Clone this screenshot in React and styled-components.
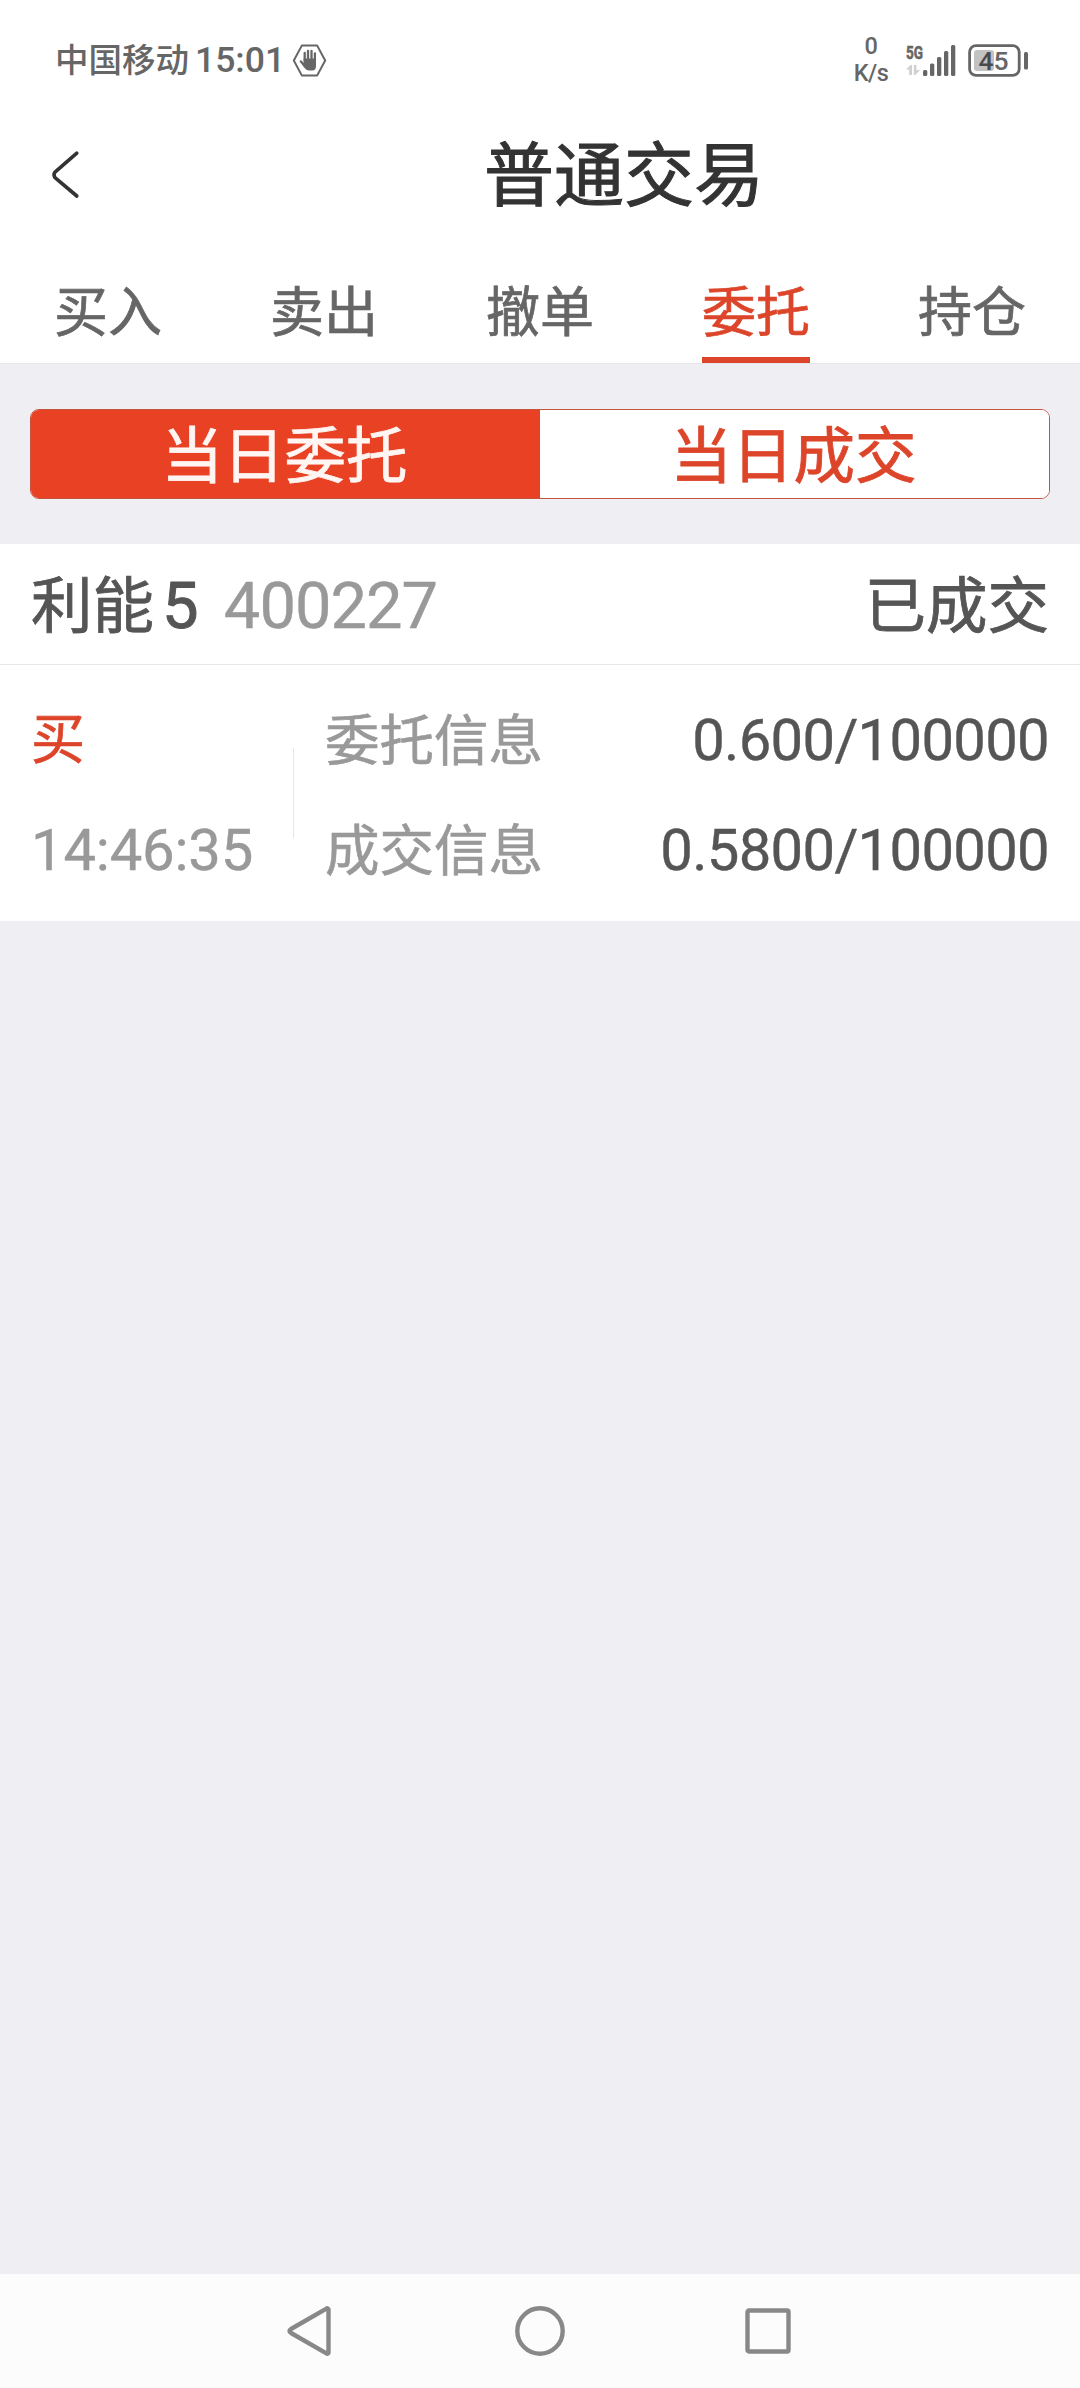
import React from "react";
import styled, { createGlobalStyle } from "styled-components";

const GlobalStyle = createGlobalStyle`
  * {
    box-sizing: border-box;
  }
  body {
    margin: 0;
    background: #efeef3;
    font-family: Roboto, "Noto Sans CJK SC", sans-serif;
  }
`;

const Screen = styled.div`
  display: flex;
  flex-direction: column;
  width: 1080px;
  height: 2388px;
  background: #efeef3;
`;

const StatusBar = styled.div`
  display: flex;
  align-items: center;
  justify-content: space-between;
  height: 120px;
  padding: 0 51px 0 55px;
  background: #fff;
  color: #666;
`;

const StatusGroup = styled.div`
  display: flex;
  align-items: center;
`;

const Carrier = styled.span`
  font-size: 33.5px;
  font-weight: 500;
  line-height: 42px;
  padding-top: 1px;
`;

const Clock = styled.span`
  margin: 0 7px 0 6px;
  font-size: 35.5px;
  font-weight: 500;
  line-height: 40px;
`;

const Speed = styled.div`
  width: 36px;
  margin-right: 17px;
  font-size: 23.5px;
  font-weight: 500;
  line-height: 27px;
  text-align: center;
  white-space: nowrap;
  letter-spacing: -0.5px;
`;

const Header = styled.div`
  display: flex;
  align-items: center;
  height: 114px;
  padding-left: 50px;
  background: #fff;
  svg {
    margin-bottom: 5px;
  }
`;

const Title = styled.div`
  margin-left: 404px;
  font-size: 70px;
  line-height: 114px;
  color: #333;
  -webkit-text-stroke: 1px;
`;

const Tabs = styled.div`
  display: flex;
  height: 130px;
  padding-top: 30px;
  background: #fff;
  border-bottom: 1px solid #e6e6e8;
`;

const Tab = styled.div`
  display: flex;
  flex: 1;
  justify-content: center;
  font-size: 54px;
  line-height: 99px;
  color: ${props => (props.$active ? "#dd452a" : "#666")};
  -webkit-text-stroke: 0.7px;
  span {
    height: 99px;
    border-bottom: 6px solid
      ${props => (props.$active ? "#dd452a" : "transparent")};
  }
`;

const SegmentWrap = styled.div`
  padding: 45px 30px;
`;

const Segment = styled.div`
  display: flex;
  height: 90px;
  border: 1px solid #c4533f;
  border-radius: 9px;
  overflow: hidden;
  background: #fff;
`;

const SegmentItem = styled.div`
  flex: 1;
  padding: 3px 2px 0 0;
  font-size: 61.5px;
  line-height: 88px;
  text-align: center;
  background: ${props => (props.$active ? "#e84124" : "#fff")};
  color: ${props => (props.$active ? "#fff5f2" : "#dd452a")};
  -webkit-text-stroke: 0.8px;
`;

const Card = styled.div`
  background: #fff;
`;

const CardHead = styled.div`
  display: flex;
  align-items: baseline;
  height: 121px;
  padding: 2px 31px 0;
  font-size: 61.5px;
  line-height: 120px;
  color: #555;
  border-bottom: 1px solid #e8e8e8;
  -webkit-text-stroke: 0.8px;
`;

const Digits = styled.span`
  font-size: ${props => props.$size}px;
  letter-spacing: -0.7px;
  -webkit-text-stroke: 0.4px;
`;

const NameDigit = styled(Digits)`
  margin-left: 8px;
  -webkit-text-stroke: 1px;
`;

const Code = styled(Digits)`
  margin-left: 26px;
  letter-spacing: -1px;
  color: #999;
`;

const State = styled.div`
  margin-left: auto;
`;

const CardBody = styled.div`
  display: flex;
  height: 256px;
  padding: 21px 31px 0;
`;

const Side = styled.div`
  width: 262px;
  font-size: 54px;
  line-height: 110px;
  color: #999;
`;

const Buy = styled.div`
  color: #dd452a;
  -webkit-text-stroke: 0.7px;
`;

const Time = styled(Digits)`
  display: block;
  margin-top: -1px;
  letter-spacing: -0.2px;
`;

const Divider = styled.div`
  width: 1px;
  height: 90px;
  margin-top: 62px;
  background: #e6e6e6;
`;

const Info = styled.div`
  flex: 1;
  margin: -1px 0 0 31px;
`;

const InfoRow = styled.div`
  display: flex;
  align-items: baseline;
  justify-content: space-between;
  height: 110px;
  font-size: 54.5px;
  line-height: 110px;
  color: #999;
  -webkit-text-stroke: 0.6px;
`;

const Value = styled(Digits)`
  color: #555;
`;

const NavBar = styled.div`
  display: flex;
  align-items: center;
  justify-content: center;
  gap: 178px;
  height: 114px;
  margin-top: auto;
  background: #fcfcfc;
`;

const HandIcon = () => (
  <svg width="35" height="33" viewBox="0 0 35 33">
    <path
      d="M9.8 1.6h15.4l8 14.9-8 14.9H9.8l-8-14.9z"
      fill="none"
      stroke="#666"
      strokeWidth="2"
      strokeLinejoin="round"
    />
    <g stroke="#666" strokeWidth="2.3" strokeLinecap="round">
      <path d="M12.7 16.5V9M16 16V6.8M19.5 16V7M22.9 17V9.3" />
      <path d="M12.5 21.5l-3.6-4" strokeWidth="2.4" />
    </g>
    <path
      d="M11.6 14.5H24v7.4c0 3-1.4 4.6-3.8 4.6h-3.4c-2.5 0-4.6-2.3-7-6.4l1.8-.6z"
      fill="#666"
    />
  </svg>
);

const SignalIcon = () => (
  <svg width="50" height="45" viewBox="0 -6 50 45">
    <text
      x="0"
      y="14.5"
      fill="#666"
      stroke="#666"
      strokeWidth="0.6"
      fontSize="19"
      fontWeight="700"
      textLength="17"
      lengthAdjust="spacingAndGlyphs"
    >
      5G
    </text>
    <path
      d="M0 25.5l4.5-4.5H6v10H3.2v-5.5zM7.8 21h2.6v5H14l-4.6 5H7.8z"
      fill="#d0d0d0"
    />
    <g fill="#666">
      <rect x="17" y="26" width="4.3" height="6" rx="1.5" />
      <rect x="24" y="19.5" width="4.3" height="12.5" rx="1.5" />
      <rect x="31" y="13" width="4.3" height="19" rx="1.5" />
      <rect x="38" y="7" width="4.3" height="25" rx="1.5" />
      <rect x="45" y="1" width="4.3" height="31" rx="1.5" />
    </g>
  </svg>
);

const Battery = styled.svg`
  margin-left: 12px;
`;

const BatteryIcon = () => (
  <Battery width="61" height="33" viewBox="0 0 61 33">
    <rect
      x="1.6"
      y="1.6"
      width="49.6"
      height="29.8"
      rx="6.5"
      fill="none"
      stroke="#666"
      strokeWidth="2.8"
    />
    <rect x="6" y="6" width="20" height="21" rx="3" fill="#c2c2c2" />
    <text x="10.5" y="26" fontSize="26.5" fontWeight="500" fill="#666">
      <tspan fill="#4a4a4a">4</tspan>5
    </text>
    <rect x="56" y="8" width="4" height="17.5" rx="1.5" fill="#666" />
  </Battery>
);

const BackIcon = () => (
  <svg width="30" height="50" viewBox="0 0 30 50">
    <path
      d="M26.8 3.2L5 22.2Q3 24.8 5 27.6L26.8 46"
      fill="none"
      stroke="#333"
      strokeWidth="3.6"
      strokeLinecap="round"
      strokeLinejoin="round"
    />
  </svg>
);

const NavIcon = ({ children }) => (
  <svg
    width="50"
    height="50"
    viewBox="0 0 50 50"
    fill="none"
    stroke="#888"
    strokeWidth="4.4"
    strokeLinejoin="round"
  >
    {children}
  </svg>
);

const tabs = ["买入", "卖出", "撤单", "委托", "持仓"];

const rows = [
  { label: "委托信息", value: "0.600/100000" },
  { label: "成交信息", value: "0.5800/100000" }
];

const App = () => {
  return (
    <Screen>
      <GlobalStyle />
      <StatusBar>
        <StatusGroup>
          <Carrier>中国移动</Carrier>
          <Clock>15:01</Clock>
          <HandIcon />
        </StatusGroup>
        <StatusGroup>
          <Speed>
            0<br />
            K/s
          </Speed>
          <SignalIcon />
          <BatteryIcon />
        </StatusGroup>
      </StatusBar>
      <Header>
        <BackIcon />
        <Title>普通交易</Title>
      </Header>
      <Tabs>
        {tabs.map(tab => (
          <Tab key={tab} $active={tab === "委托"}>
            <span>{tab}</span>
          </Tab>
        ))}
      </Tabs>
      <SegmentWrap>
        <Segment>
          <SegmentItem $active>当日委托</SegmentItem>
          <SegmentItem>当日成交</SegmentItem>
        </Segment>
      </SegmentWrap>
      <Card>
        <CardHead>
          利能
          <NameDigit $size={65}>5</NameDigit>
          <Code $size={65}>400227</Code>
          <State>已成交</State>
        </CardHead>
        <CardBody>
          <Side>
            <Buy>买</Buy>
            <Time $size={58}>14:46:35</Time>
          </Side>
          <Divider />
          <Info>
            {rows.map(row => (
              <InfoRow key={row.label}>
                {row.label}
                <Value $size={58}>{row.value}</Value>
              </InfoRow>
            ))}
          </Info>
        </CardBody>
      </Card>
      <NavBar>
        <NavIcon>
          <path d="M41.5 3.4V46.6Q41 48.5 39 47.2L4 27Q1 25 4 23L39 2.8Q41 1.5 41.5 3.4z" />
        </NavIcon>
        <NavIcon>
          <circle cx="25" cy="25" r="22.7" />
        </NavIcon>
        <NavIcon>
          <rect x="4.5" y="4.5" width="41" height="41" rx="1.5" />
        </NavIcon>
      </NavBar>
    </Screen>
  );
};

export default App;
